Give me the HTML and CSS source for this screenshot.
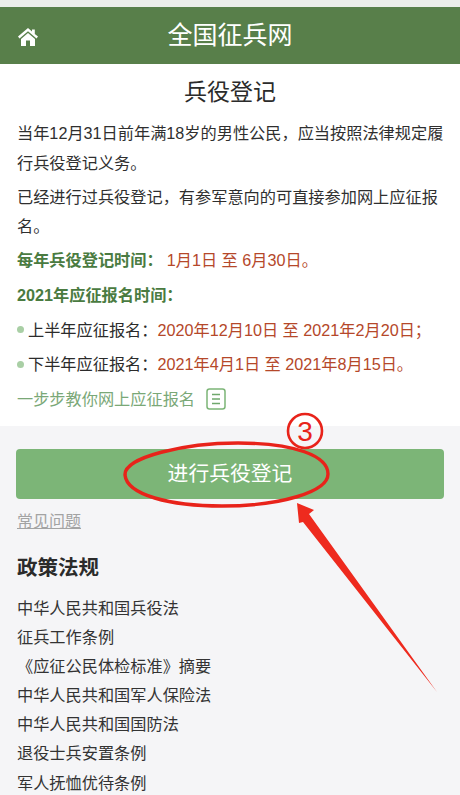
FILE: index.html
```html
<!DOCTYPE html>
<html lang="zh-CN">
<head>
<meta charset="utf-8">
<title>兵役登记</title>
<link rel="stylesheet" href="styles.css">
</head>
<body>
<div class="page">
  <header class="topbar">
    <svg class="home" viewBox="0 0 20 18" width="20" height="18"><path d="M10 0 L0 8.6 L1.5 10.4 L10 3.2 L18.5 10.4 L20 8.6 L16.8 5.9 V1.5 H14 V3.5 Z M10 5 L3 11 V18 H8 V12.6 H12 V18 H17 V11 Z" fill="#fff"/></svg>
    <span class="site">全国征兵网</span>
  </header>
  <section class="intro">
    <h1>兵役登记</h1>
    <p class="body two">当年12月31日前年满18岁的男性公民&#xFF0C;应当按照法律规定履行兵役登记义务。</p>
    <p class="body second">已经进行过兵役登记&#xFF0C;有参军意向的可直接参加网上应征报名。</p>
    <p class="line first"><b>每年兵役登记时间&#xFF1A;</b><span class="date gap">1月1日 至 6月30日。</span></p>
    <p class="line"><b>2021年应征报名时间&#xFF1A;</b></p>
    <p class="line item"><i class="dot"></i>上半年应征报名&#xFF1A;<span class="date">2020年12月10日 至 2021年2月20日&#xFF1B;</span></p>
    <p class="line item"><i class="dot"></i>下半年应征报名&#xFF1A;<span class="date">2021年4月1日 至 2021年8月15日。</span></p>
    <p class="line guide">一步步教你网上应征报名
      <svg class="doc" viewBox="0 0 20 22" width="20" height="22"><rect x="1" y="1" width="18" height="20" rx="2.5" fill="none" stroke="#7cb577" stroke-width="1.5"/><path d="M6 6.5H14M6 11H14M6 15.5H14" stroke="#6fa86c" stroke-width="1.6"/></svg>
    </p>
  </section>
  <section class="lower">
    <button class="cta">进行兵役登记</button>
    <a class="faq">常见问题</a>
    <h2>政策法规</h2>
    <ul class="laws">
      <li>中华人民共和国兵役法</li>
      <li>征兵工作条例</li>
      <li>《应征公民体检标准》摘要</li>
      <li>中华人民共和国军人保险法</li>
      <li>中华人民共和国国防法</li>
      <li>退役士兵安置条例</li>
      <li>军人抚恤优待条例</li>
    </ul>
  </section>
  <svg class="marks" viewBox="0 0 460 795" width="460" height="795">
    <circle cx="305" cy="431" r="17" fill="none" stroke="#e8231a" stroke-width="2.6"/>
    <text x="305" y="441" text-anchor="middle" class="three">3</text>
    <path d="M125 475 C124 457 185 443 238 443 C295 443 328 456 328 474 C328 492 280 506 222 506 C170 506 127 495 125 475 Z" fill="none" stroke="#e8231a" stroke-width="3.4"/>
    <path d="M297 503 L314 510 L309 514 L437 692 L303 522 L299 523 Z" fill="#ee2a1e"/>
  </svg>
</div>
</body>
</html>
```
FILE: styles.css
```css
* { box-sizing: border-box; }
html, body { margin: 0; padding: 0; }
body { font-family: "Liberation Sans", "Noto Sans CJK SC", sans-serif; color: #2b2b2b; background: #f5f5f7; }
.page { position: relative; width: 460px; height: 795px; overflow: hidden; padding-top: 7px; background: linear-gradient(#ebeeea 7px, #f5f5f7 7px); }
.topbar { position: relative; height: 57px; background: #587f4a; display: flex; align-items: center; justify-content: center; }
.home { position: absolute; left: 18px; top: 21px; }
.site { color: #fff; font-size: 25px; line-height: 57px; }
.intro { background: #fff; height: 362px; padding: 11px 17px 0; }
h1 { margin: 0; font-size: 23px; font-weight: 400; line-height: 34px; text-align: center; color: #2b2b2b; }
p { margin: 0; font-size: 16.2px; }
.body { line-height: 30px; width: 428px; color: #2f2f2f; }
.two { margin-top: 9px; }
.second { margin-top: 5px; line-height: 28.5px; }
.line { height: 34.6px; line-height: 34.6px; white-space: nowrap; display: flex; align-items: center; }
.first { margin-top: 3px; height: 35px; }
.line b { color: #4a7b41; font-weight: 700; }
.date { color: #b5482a; }
.gap { margin-left: 4px; white-space: pre; }
.dot { width: 7px; height: 7px; border-radius: 50%; background: #a9cfa5; margin-right: 4px; flex: none; }
.guide { color: #7aa877; }
.doc { margin-left: 11px; flex: none; }
.lower { padding: 23px 16px 0; }
.cta { display: block; width: 428px; height: 50px; border: 0; border-radius: 4px; background: #7cb577; color: #fff; font: 400 20.8px/50px "Liberation Sans", "Noto Sans CJK SC", sans-serif; padding: 0; }
.faq { display: block; width: 65px; margin: 13px 0 0 1px; font-size: 16px; line-height: 20px; color: #a3a3a3; text-decoration: underline; }
h2 { margin: 21px 0 0 1px; font-size: 20.5px; line-height: 30px; font-weight: 700; color: #2b2b2b; }
.laws { list-style: none; margin: 11px 0 0 1px; padding: 0; }
.laws li { font-size: 16.2px; line-height: 29.1px; color: #333; white-space: nowrap; }
.marks { position: absolute; left: 0; top: 0; pointer-events: none; }
.three { font-family: "Liberation Sans", sans-serif; font-size: 28px; fill: #e8231a; }
```
